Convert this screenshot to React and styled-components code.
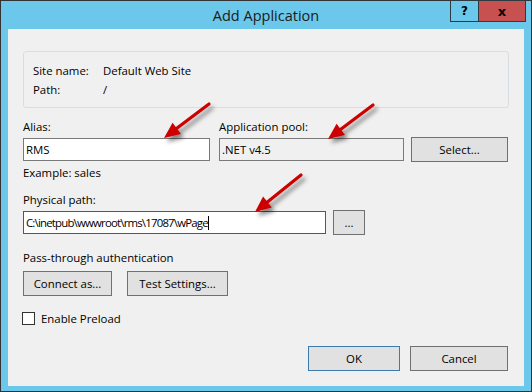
import React from 'react';
import styled, { createGlobalStyle } from 'styled-components';

const GlobalStyle = createGlobalStyle`
  html, body {
    margin: 0;
    padding: 0;
    background: #6bc8ea;
  }
  body {
    font-family: "Open Sans", "Noto Sans", sans-serif;
    font-size: 11.4px;
    color: #000;
  }
`;

const Window = styled.div`
  position: relative;
  width: 532px;
  height: 392px;
  box-sizing: border-box;
  border: 1px solid #333;
  background: #6bc8ea;
  display: flex;
  flex-direction: column;
`;

const TitleBar = styled.div`
  height: 30px;
  display: grid;
  grid-template-columns: 1fr auto 1fr;
  align-items: center;
`;

const Title = styled.div`
  grid-column: 2;
  font-size: 14.5px;
  color: #1b1b1b;
  padding-top: 1px;
`;

const Controls = styled.div`
  grid-column: 3;
  justify-self: end;
  align-self: start;
  margin: -1px 5px 0 0;
  display: flex;
  border: 1px solid #2e3a40;
  height: 20px;
`;

const CaptionButton = styled.div`
  width: ${p => p.$width}px;
  display: flex;
  align-items: center;
  justify-content: center;
  background: ${p => (p.$close ? '#c75050' : 'transparent')};
  border-left: ${p => (p.$close ? '1px solid #2e3a40' : 'none')};
  font-family: "DejaVu Sans", sans-serif;
  font-weight: bold;
  font-size: ${p => (p.$close ? 13 : 12)}px;
  color: #000;
`;

const Client = styled.div`
  flex: 1;
  margin: 0 7px 5px 7px;
  background: #f0f0f0;
  padding: 22px 15px 15px 15px;
  display: flex;
  flex-direction: column;
`;

const InfoBox = styled.div`
  width: 486px;
  box-sizing: border-box;
  height: 57px;
  border: 1px solid #d8dde2;
  border-radius: 3px;
  padding: 9px 9px 0 9px;
  display: grid;
  grid-template-columns: 70px 1fr;
  grid-auto-rows: 19px;
  align-items: center;
`;

const Section = styled.div`
  margin-top: ${p => p.$top || 0}px;
  display: flex;
  flex-direction: column;
`;

const Label = styled.div`
  line-height: 16px;
  margin-bottom: ${p => (p.$gap === undefined ? 3 : p.$gap)}px;
`;

const Row = styled.div`
  display: flex;
  align-items: ${p => p.$align || 'center'};
  gap: ${p => p.$gap || 0}px;
`;

const Field = styled.div`
  display: flex;
  flex-direction: column;
  margin-right: ${p => p.$space || 0}px;
`;

const TextBox = styled.div`
  width: ${p => p.$width}px;
  height: 23px;
  box-sizing: border-box;
  border: 1px solid ${p => (p.$focused ? '#2b6295' : '#7a7a7a')};
  background: ${p => (p.$disabled ? '#f0f0f0' : '#fff')};
  padding: 0 2px;
  display: flex;
  align-items: center;
  white-space: nowrap;
  letter-spacing: ${p => p.$tight || 0}px;
`;

const Caret = styled.span`
  display: inline-block;
  width: 1px;
  height: 14px;
  background: #000;
`;

const Button = styled.button`
  width: ${p => p.$width}px;
  height: 25px;
  box-sizing: border-box;
  padding: 0;
  margin: 0 0 ${p => p.$drop || 0}px 0;
  background: #e1e1e1;
  border: 1px solid ${p => (p.$default ? '#3d7bad' : '#707070')};
  font-family: inherit;
  font-size: 11.4px;
  color: #000;
`;

const CheckRow = styled.label`
  display: flex;
  align-items: center;
  height: 17px;
  gap: 6px;
`;

const CheckBox = styled.span`
  width: 13px;
  height: 13px;
  box-sizing: border-box;
  border: 1px solid #333;
  background: #fff;
  margin-left: -1px;
`;

const Footer = styled.div`
  margin-top: 19px;
  display: flex;
  justify-content: flex-end;
  gap: 10px;
  padding-right: 1px;
`;

const Overlay = styled.svg`
  position: absolute;
  top: -1px;
  left: -1px;
  pointer-events: none;
`;

function arrowHead(from, to, len = 16, half = 7) {
  const dx = to[0] - from[0];
  const dy = to[1] - from[1];
  const d = Math.hypot(dx, dy);
  const ux = dx / d;
  const uy = dy / d;
  const bx = to[0] - ux * len;
  const by = to[1] - uy * len;
  const pts = [
    [to[0], to[1]],
    [bx - uy * half, by + ux * half],
    [bx + uy * half, by - ux * half],
  ];
  return { base: [bx + ux * 2, by + uy * 2], pts: pts.map(p => p.join(',')).join(' ') };
}

const arrows = [
  { from: [209, 104], to: [164, 138] },
  { from: [373, 105], to: [328, 139] },
  { from: [301, 175], to: [255, 212] },
];

const Arrows = () => (
  <Overlay width="532" height="392" viewBox="0 0 532 392">
    <defs>
      <filter id="shadow" x="-30%" y="-30%" width="160%" height="160%">
        <feDropShadow dx="3" dy="4" stdDeviation="2" floodColor="#000" floodOpacity="0.45" />
      </filter>
    </defs>
    {arrows.map((a, i) => {
      const h = arrowHead(a.from, a.to);
      return (
        <g key={i} filter="url(#shadow)">
          <line
            x1={a.from[0]}
            y1={a.from[1]}
            x2={h.base[0]}
            y2={h.base[1]}
            stroke="#cc0000"
            strokeWidth="3.2"
            strokeLinecap="round"
          />
          <polygon points={h.pts} fill="#cc0000" />
        </g>
      );
    })}
  </Overlay>
);

export default function App() {
  return (
    <>
      <GlobalStyle />
      <Window>
        <TitleBar>
          <Title>Add Application</Title>
          <Controls>
            <CaptionButton $width={27}>?</CaptionButton>
            <CaptionButton $width={46} $close>x</CaptionButton>
          </Controls>
        </TitleBar>
        <Client>
          <InfoBox>
            <span>Site name:</span>
            <span>Default Web Site</span>
            <span>Path:</span>
            <span>/</span>
          </InfoBox>

          <Section $top={11}>
            <Row $align="flex-end">
              <Field $space={9}>
                <Label>Alias:</Label>
                <TextBox $width={187}>RMS</TextBox>
              </Field>
              <Field $space={7}>
                <Label>Application pool:</Label>
                <TextBox $width={185} $disabled>.NET v4.5</TextBox>
              </Field>
              <Button $width={97} $drop={-1}>Select...</Button>
            </Row>
            <Label $gap={0} style={{ marginTop: 4 }}>Example: sales</Label>
          </Section>

          <Section $top={11}>
            <Label $gap={2}>Physical path:</Label>
            <Row $gap={7}>
              <TextBox $width={303} $focused $tight={-0.8}>
                C:\inetpub\wwwroot\rms\17087\wPage
                <Caret />
              </TextBox>
              <Button $width={32}>...</Button>
            </Row>
          </Section>

          <Section $top={15}>
            <Label $gap={5}>Pass-through authentication</Label>
            <Row $gap={15}>
              <Button $width={89}>Connect as...</Button>
              <Button $width={101}>Test Settings...</Button>
            </Row>
          </Section>

          <Section $top={14}>
            <CheckRow>
              <CheckBox />
              Enable Preload
            </CheckRow>
          </Section>

          <Footer>
            <Button $width={92} $default>OK</Button>
            <Button $width={98}>Cancel</Button>
          </Footer>
        </Client>
        <Arrows />
      </Window>
    </>
  );
}
